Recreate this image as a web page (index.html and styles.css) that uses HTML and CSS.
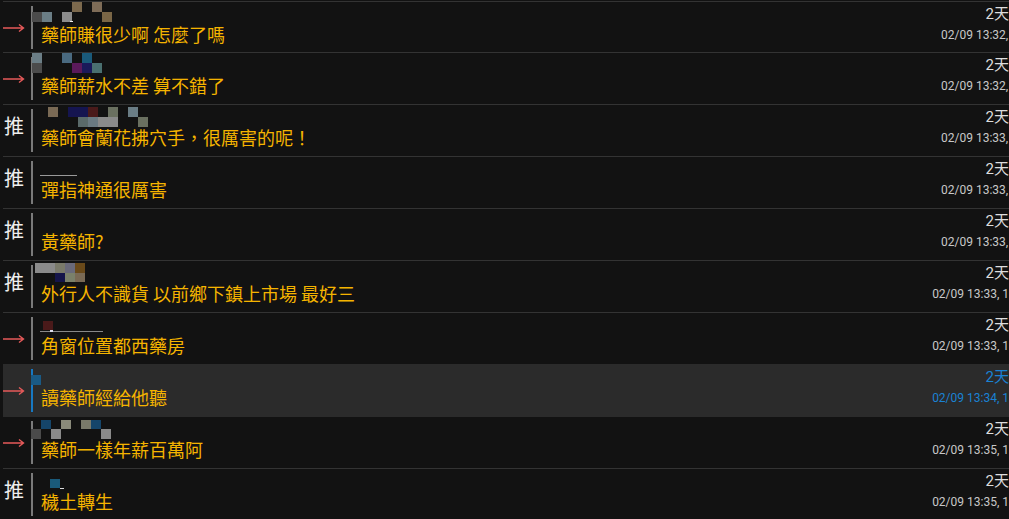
FILE: index.html
```html
<!DOCTYPE html>
<html lang="zh-Hant">
<head>
  <meta charset="UTF-8">
  <meta name="viewport" content="width=device-width, initial-scale=1.0">
  <title>推文</title>
  <link rel="stylesheet" href="styles.css">
</head>
<body>
  <div class="list">

    <div class="row">
      <div class="tag tag-arrow"><svg width="22" height="10" viewBox="0 0 22 10"><path d="M0 5H20.5M16 1.5L20.5 5L16 8.5" /></svg></div>
      <div class="comment">
        <div class="user"><svg width="130" height="24">
          <rect x="41" y="0" width="10" height="10" fill="#7c694d"/>
          <rect x="61" y="0" width="10" height="10" fill="#7e6c57"/>
          <rect x="1" y="10" width="10" height="10" fill="#4b4b4b"/>
          <rect x="11" y="10" width="10" height="10" fill="#6b7e86"/>
          <rect x="31" y="10" width="10" height="10" fill="#8c8c8c"/>
          <rect x="71" y="10" width="10" height="10" fill="#7a6646"/>
          <rect x="39" y="19" width="3" height="1" fill="#eee"/>
        </svg></div>
        <div class="text">藥師賺很少啊 怎麼了嗎</div>
      </div>
      <div class="meta"><div class="ago">2天</div><div class="date">02/09 13:32, 1</div></div>
    </div>

    <div class="row">
      <div class="tag tag-arrow"><svg width="22" height="10" viewBox="0 0 22 10"><path d="M0 5H20.5M16 1.5L20.5 5L16 8.5" /></svg></div>
      <div class="comment">
        <div class="user"><svg width="130" height="24">
          <rect x="1" y="0" width="10" height="10" fill="#6b7e86"/>
          <rect x="31" y="0" width="10" height="10" fill="#4a6a80"/>
          <rect x="51" y="0" width="10" height="10" fill="#1a5a7a"/>
          <rect x="1" y="10" width="10" height="10" fill="#4b4b4b"/>
          <rect x="41" y="10" width="10" height="10" fill="#5a1a5a"/>
          <rect x="51" y="10" width="10" height="10" fill="#1a1a5a"/>
          <rect x="61" y="10" width="10" height="10" fill="#4a7070"/>
        </svg></div>
        <div class="text">藥師薪水不差 算不錯了</div>
      </div>
      <div class="meta"><div class="ago">2天</div><div class="date">02/09 13:32, 1</div></div>
    </div>

    <div class="row">
      <div class="tag tag-push">推</div>
      <div class="comment">
        <div class="user"><svg width="130" height="24">
          <rect x="17" y="2" width="10" height="10" fill="#7a6a55"/>
          <rect x="37" y="2" width="20" height="10" fill="#151550"/>
          <rect x="57" y="2" width="10" height="10" fill="#4a1a1a"/>
          <rect x="77" y="2" width="10" height="10" fill="#6a7060"/>
          <rect x="97" y="2" width="10" height="10" fill="#6a7d85"/>
          <rect x="47" y="12" width="10" height="10" fill="#5a6a6a"/>
          <rect x="57" y="12" width="10" height="10" fill="#6a7a82"/>
          <rect x="67" y="12" width="20" height="10" fill="#8a8a8a"/>
          <rect x="107" y="12" width="10" height="10" fill="#6a7060"/>
        </svg></div>
        <div class="text">藥師會蘭花拂穴手，很厲害的呢！</div>
      </div>
      <div class="meta"><div class="ago">2天</div><div class="date">02/09 13:33, 1</div></div>
    </div>

    <div class="row">
      <div class="tag tag-push">推</div>
      <div class="comment">
        <div class="user"><svg width="130" height="24">
          <rect x="9" y="18" width="37" height="1" fill="#999"/>
        </svg></div>
        <div class="text">彈指神通很厲害</div>
      </div>
      <div class="meta"><div class="ago">2天</div><div class="date">02/09 13:33, 1</div></div>
    </div>

    <div class="row">
      <div class="tag tag-push">推</div>
      <div class="comment">
        <div class="user"></div>
        <div class="text">黃藥師?</div>
      </div>
      <div class="meta"><div class="ago">2天</div><div class="date">02/09 13:33, 1</div></div>
    </div>

    <div class="row">
      <div class="tag tag-push">推</div>
      <div class="comment">
        <div class="user"><svg width="130" height="24">
          <rect x="4" y="2" width="20" height="10" fill="#8a8a8a"/>
          <rect x="24" y="2" width="10" height="10" fill="#7a7a6a"/>
          <rect x="34" y="2" width="10" height="10" fill="#6a6a7a"/>
          <rect x="44" y="2" width="10" height="10" fill="#6a4a1a"/>
          <rect x="24" y="12" width="10" height="9" fill="#15154a"/>
          <rect x="34" y="12" width="10" height="9" fill="#7a806a"/>
          <rect x="44" y="12" width="10" height="9" fill="#7a6a55"/>
        </svg></div>
        <div class="text">外行人不識貨 以前鄉下鎮上市場 最好三</div>
      </div>
      <div class="meta meta-wide"><div class="ago">2天</div><div class="date">02/09 13:33, 1</div></div>
    </div>

    <div class="row">
      <div class="tag tag-arrow"><svg width="22" height="10" viewBox="0 0 22 10"><path d="M0 5H20.5M16 1.5L20.5 5L16 8.5" /></svg></div>
      <div class="comment">
        <div class="user"><svg width="130" height="24">
          <rect x="12" y="8" width="10" height="9" fill="#4a1a1a"/>
          <rect x="9" y="18" width="63" height="1" fill="#888"/>
          <rect x="19" y="17" width="3" height="2" fill="#dde"/>
        </svg></div>
        <div class="text">角窗位置都西藥房</div>
      </div>
      <div class="meta meta-wide"><div class="ago">2天</div><div class="date">02/09 13:33, 1</div></div>
    </div>

    <div class="row row-active">
      <div class="tag tag-arrow"><svg width="22" height="10" viewBox="0 0 22 10"><path d="M0 5H20.5M16 1.5L20.5 5L16 8.5" /></svg></div>
      <div class="comment">
        <div class="user"><svg width="130" height="24">
          <rect x="0" y="10" width="10" height="10" fill="#1a5a85"/>
        </svg></div>
        <div class="text">讀藥師經給他聽</div>
      </div>
      <div class="meta meta-wide"><div class="ago">2天</div><div class="date">02/09 13:34, 1</div></div>
    </div>

    <div class="row">
      <div class="tag tag-arrow"><svg width="22" height="10" viewBox="0 0 22 10"><path d="M0 5H20.5M16 1.5L20.5 5L16 8.5" /></svg></div>
      <div class="comment">
        <div class="user"><svg width="130" height="24">
          <rect x="10" y="3" width="10" height="9" fill="#15456a"/>
          <rect x="30" y="3" width="10" height="9" fill="#8a8a7a"/>
          <rect x="50" y="3" width="10" height="9" fill="#7a7a6a"/>
          <rect x="60" y="3" width="10" height="9" fill="#15456a"/>
          <rect x="0" y="12" width="10" height="10" fill="#4a4a4a"/>
          <rect x="20" y="12" width="10" height="10" fill="#8a8a8a"/>
          <rect x="70" y="12" width="10" height="10" fill="#8a8a8a"/>
        </svg></div>
        <div class="text">藥師一樣年薪百萬阿</div>
      </div>
      <div class="meta meta-wide"><div class="ago">2天</div><div class="date">02/09 13:35, 1</div></div>
    </div>

    <div class="row">
      <div class="tag tag-push">推</div>
      <div class="comment">
        <div class="user"><svg width="130" height="24">
          <rect x="19" y="10" width="10" height="9" fill="#1a5a7a"/>
          <rect x="29" y="19" width="4" height="1" fill="#ddd"/>
        </svg></div>
        <div class="text">穢土轉生</div>
      </div>
      <div class="meta meta-wide"><div class="ago">2天</div><div class="date">02/09 13:35, 1</div></div>
    </div>

  </div>
</body>
</html>
```

FILE: styles.css
```css
* {
  margin: 0;
  padding: 0;
  box-sizing: border-box;
}

html, body {
  overflow: hidden;
}

body {
  background-color: #121212;
  font-family: "Noto Sans CJK TC", sans-serif;
  height: 100vh;
}

.list {
  padding-top: 1px;
}

.row {
  display: flex;
  height: 52px;
  margin-left: 3px;
  border-top: 1px solid #333;
}

.row:first-child {
  height: 51px;
}

.row-active {
  background-color: #2b2b2b;
  border-top-color: #2b2b2b;
}

.row-active + .row {
  border-top-color: #2b2b2b;
}

.tag {
  flex: none;
  width: 28px;
}

.tag-arrow {
  padding-top: 21px;
}

.tag-arrow svg {
  display: block;
  fill: none;
  stroke: #e65a5a;
  stroke-width: 1.4;
}

.tag-push {
  padding-top: 11px;
  padding-left: 1px;
  font-size: 20px;
  line-height: 20px;
  color: #eee;
}

.comment {
  flex: 1;
  min-width: 0;
  height: 43px;
  margin-top: 4px;
  padding-left: 8px;
  border-left: 2px solid #7a7a7a;
}

.row-active .comment {
  border-left-color: #1778c2;
}

.user {
  position: relative;
  height: 19px;
}

.user svg {
  position: absolute;
  top: -4px;
  left: -10px;
}

.text {
  font-size: 18px;
  line-height: 18px;
  color: #f5b400;
  white-space: nowrap;
}

.meta {
  flex: none;
  width: 68px;
  padding-top: 2px;
  text-align: right;
  white-space: nowrap;
  font-family: Roboto, "Noto Sans CJK TC", sans-serif;
}

.meta-wide {
  width: 77px;
}

.ago {
  font-size: 15px;
  line-height: 20px;
  color: #ddd;
}

.date {
  margin-top: 3px;
  font-size: 12px;
  line-height: 16px;
  color: #c8c8c8;
}

.row-active .ago,
.row-active .date {
  color: #1a82d4;
}
```
